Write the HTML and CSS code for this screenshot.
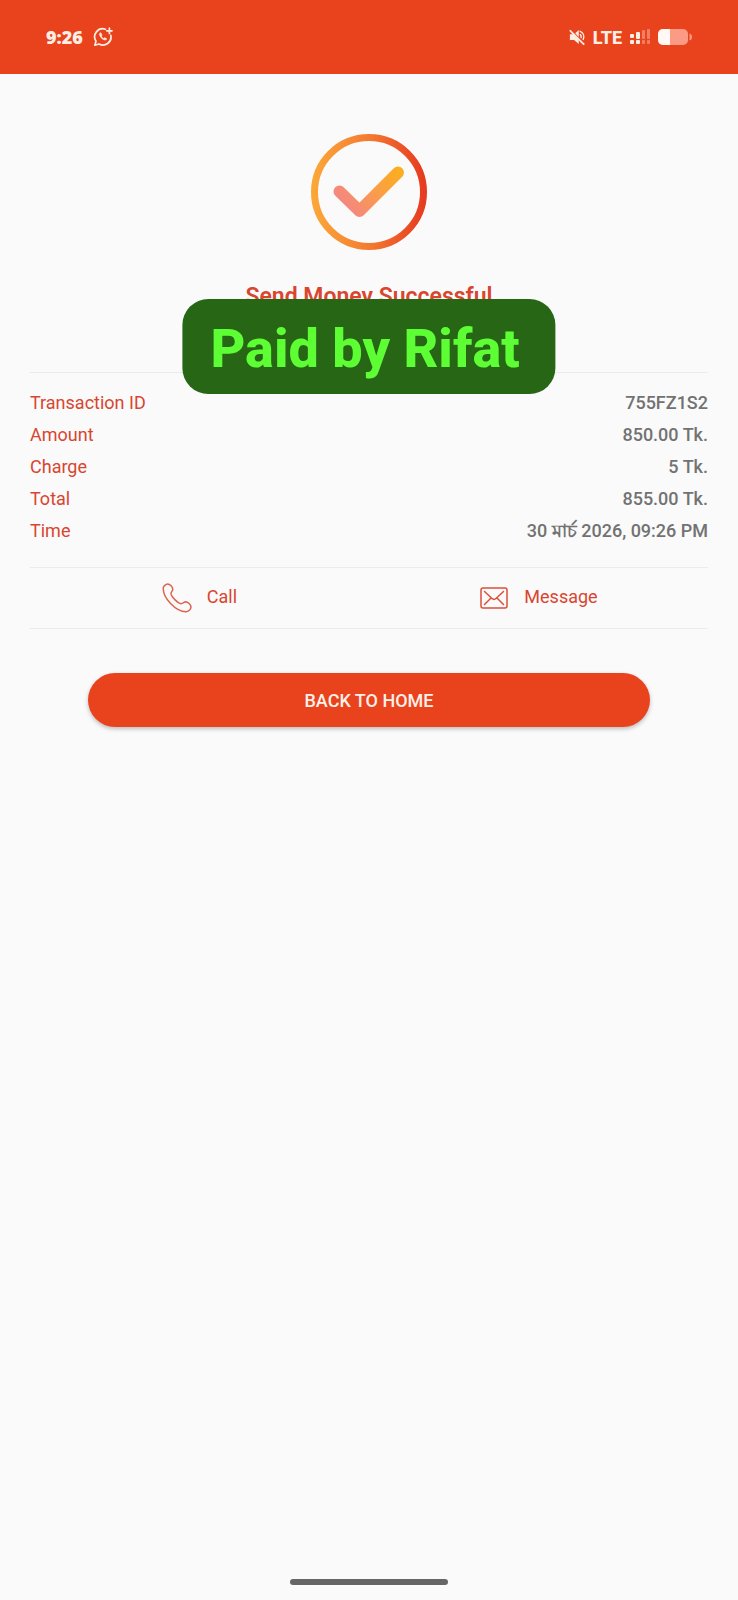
FILE: index.html
```html
<!DOCTYPE html>
<html lang="bn">

<head>
  <meta charset="UTF-8">
  <meta name="viewport" content="width=device-width, initial-scale=1.0">
  <title>Send Money</title>
  <link rel="stylesheet" href="styles.css">
</head>

<body>
  <header class="status-bar">
    <div class="status-left">
      <span class="clock">9:26</span>
      <svg class="icon-chat" viewBox="0 0 20 20" fill="none" stroke="#ffeee4" stroke-width="1.7" stroke-linecap="round" stroke-linejoin="round">
        <path d="M12.4 2.3A8 8 0 0 0 3 14.2L1.8 18.2L6 17A8 8 0 0 0 17.8 8.4" />
        <path d="M16.4 1.2v5.2M13.8 3.8H19" />
        <path d="M6.7 6.2C5.2 8.4 10.4 14.5 13.4 12.6L13.6 11.6L11.6 10.7L10.7 11.5C9.4 10.9 8.8 10.2 8.3 9.1L9 8.2L8 6.1Z" fill="#ffeee4" stroke-width="0.6" />
      </svg>
    </div>
    <div class="status-right">
      <svg class="icon-mute" viewBox="0 0 18 18" fill="none" stroke="#ffeee4" stroke-width="1.6" stroke-linecap="round">
        <path d="M1 5.800H4.500L11 12.400V17L5.700 12.400H1ZM7 4.700L11 1v8Z" fill="#ffeee4" stroke="none" />
        <path d="M1.500 2L16.500 17" stroke-width="2" />
        <path d="M12.800 6.300Q14 7.500 13.600 9.600M12.600 2.600C16.200 4.200 17.500 8 16 11.700" />
      </svg>
      <span class="network">LTE</span>
      <svg class="icon-signal" viewBox="0 0 20 16" fill="#ffeee4">
        <rect x="0" y="5" width="4" height="4" rx="1" />
        <rect x="0" y="11" width="4" height="4" rx="1" />
        <rect x="6" y="3" width="4" height="7" rx="1" />
        <rect x="6" y="11" width="4" height="4" rx="1" />
        <g opacity="0.35">
          <rect x="12" y="1" width="3" height="9" rx="1" />
          <rect x="12" y="11" width="3" height="4" rx="1" />
          <rect x="17" y="0" width="3" height="10" rx="1" />
          <rect x="17" y="11" width="3" height="4" rx="1" />
        </g>
      </svg>
      <svg class="icon-battery" viewBox="0 0 34 16">
        <rect width="30" height="16" rx="5" fill="#fb9b86" />
        <path d="M5 0H12V16H5A5 5 0 0 1 0 11V5A5 5 0 0 1 5 0Z" fill="#fff8f4" />
        <path d="M31.500 4.500Q34 5 34 8T31.500 11.500Z" fill="#fb9b86" />
      </svg>
    </div>
  </header>

  <main class="receipt">
    <section class="result">
      <svg class="icon-success" viewBox="0 0 116 116" fill="none">
        <defs>
          <linearGradient id="ring" x1="0" y1="0" x2="1" y2="0">
            <stop offset="0" stop-color="#fba639" />
            <stop offset="0.5" stop-color="#f47b31" />
            <stop offset="1" stop-color="#e63c20" />
          </linearGradient>
          <linearGradient id="tick" gradientUnits="userSpaceOnUse" x1="42" y1="76" x2="92" y2="36">
            <stop offset="0" stop-color="#f5897b" />
            <stop offset="0.55" stop-color="#fba040" />
            <stop offset="1" stop-color="#fbb01c" />
          </linearGradient>
        </defs>
        <circle cx="58" cy="58" r="54.500" stroke="url(#ring)" stroke-width="7" />
        <path d="M28.500 57.500L48.500 77L87 38.500" stroke="url(#tick)" stroke-width="12" stroke-linecap="round" stroke-linejoin="round" />
      </svg>
      <h1 class="title">Send Money Successful</h1>
      <div class="paid-badge">Paid by Rifat</div>
    </section>

    <dl class="details">
      <div class="row">
        <dt>Transaction ID</dt>
        <dd>755FZ1S2</dd>
      </div>
      <div class="row">
        <dt>Amount</dt>
        <dd>850.00 Tk.</dd>
      </div>
      <div class="row">
        <dt>Charge</dt>
        <dd>5 Tk.</dd>
      </div>
      <div class="row">
        <dt>Total</dt>
        <dd>855.00 Tk.</dd>
      </div>
      <div class="row">
        <dt>Time</dt>
        <dd>30 <span class="month">মার্চ</span> 2026, 09:26 PM</dd>
      </div>
    </dl>

    <div class="actions">
      <button type="button" class="action">
        <svg class="icon-action" viewBox="0 0 30 30" fill="none" stroke="#dd6350" stroke-width="1.500" stroke-linejoin="round">
          <path d="M1.200 5C1.400 3.200 3.800 1 5.600 1C8 1 10.800 4.200 10.800 6.200C10.800 8 8.600 9 9 11.200C9.600 14 15.400 19.800 18.400 20.600C20.600 21 22 19 23.600 18.800C25.800 18.800 29 21.800 29 24C29 26.400 26.200 28.800 24 28.800C14 28.800 1 15.400 1.200 5Z" />
        </svg>
        <span class="action-label">Call</span>
      </button>
      <button type="button" class="action">
        <svg class="icon-action" viewBox="0 0 30 30" fill="none" stroke="#dd4f3b" stroke-width="1.500" stroke-linecap="round" stroke-linejoin="round">
          <rect x="2" y="5" width="26" height="20" rx="2" />
          <path d="M5.500 8.500L13 15.500Q15 17.300 17 15.500L24.500 8.500M5.500 21.500L12 15M24.500 21.500L18 15" />
        </svg>
        <span class="action-label">Message</span>
      </button>
    </div>

    <button type="button" class="home-button">BACK TO HOME</button>
  </main>

  <div class="nav-handle"></div>
</body>

</html>
```
FILE: styles.css
```css
* {
  margin: 0;
  padding: 0;
  box-sizing: border-box;
}

body {
  min-height: 100vh;
  display: flex;
  flex-direction: column;
  background-color: #fafafa;
  color: #d9452f;
  font-family: Roboto, "Noto Sans", sans-serif;
  font-size: 18px;
}

button {
  border: none;
  background: none;
  color: inherit;
  font: inherit;
  cursor: pointer;
}

.status-bar {
  height: 74px;
  padding: 0 46px;
  display: flex;
  justify-content: space-between;
  align-items: center;
  background-color: #e9431e;
  color: #ffeee4;
}

.status-left,
.status-right {
  display: flex;
  align-items: center;
}

.status-left {
  gap: 10px;
}

.status-right {
  gap: 8px;
}

.clock {
  font-family: "Open Sans", sans-serif;
  font-weight: 800;
}

.network {
  font-weight: 800;
}

.icon-chat {
  width: 20px;
  height: 20px;
}

.icon-mute {
  width: 16px;
  height: 16px;
}

.icon-signal {
  width: 20px;
  height: 16px;
}

.icon-battery {
  width: 34px;
  height: 16px;
}

.receipt {
  flex: 1;
  padding: 0 30px;
}

.result {
  position: relative;
  height: 299px;
  padding-top: 60px;
  display: flex;
  flex-direction: column;
  align-items: center;
  gap: 32px;
  border-bottom: 1px solid #ebebeb;
}

.icon-success {
  width: 116px;
  height: 116px;
}

.title {
  font-size: 23px;
  line-height: 30px;
  font-weight: 600;
}

/* stamp over the title and the first divider */
.paid-badge {
  position: absolute;
  top: 225px;
  left: 50%;
  transform: translateX(-50%);
  padding: 18px 36px 13px 28px;
  border-radius: 26px;
  background-color: #266615;
  color: #5dff34;
  font-size: 54px;
  line-height: 64px;
  font-weight: 800;
  white-space: nowrap;
}

.details {
  padding: 14px 0 20px;
  border-bottom: 1px solid #ebebeb;
}

.row {
  display: flex;
  justify-content: space-between;
  line-height: 32px;
}

.row dd {
  color: #727272;
  font-weight: 500;
}

.row .month {
  font-weight: 700;
}

.actions {
  display: grid;
  grid-template-columns: 1fr 1fr;
  border-bottom: 1px solid #ebebeb;
}

.action {
  height: 60px;
  display: flex;
  justify-content: center;
  align-items: center;
  gap: 15px;
}

.action-label {
  padding-bottom: 4px;
}

.icon-action {
  width: 30px;
  height: 30px;
}

.home-button {
  display: block;
  width: 83%;
  height: 54px;
  margin: 44px auto;
  border-radius: 27px;
  background-color: #e9431e;
  box-shadow: 0 2px 4px rgba(0, 0, 0, 0.25);
  color: #fff0e8;
  font-weight: 500;
}

.nav-handle {
  width: 158px;
  height: 6px;
  margin: 0 auto 15px;
  border-radius: 3px;
  background-color: #666666;
}
```
